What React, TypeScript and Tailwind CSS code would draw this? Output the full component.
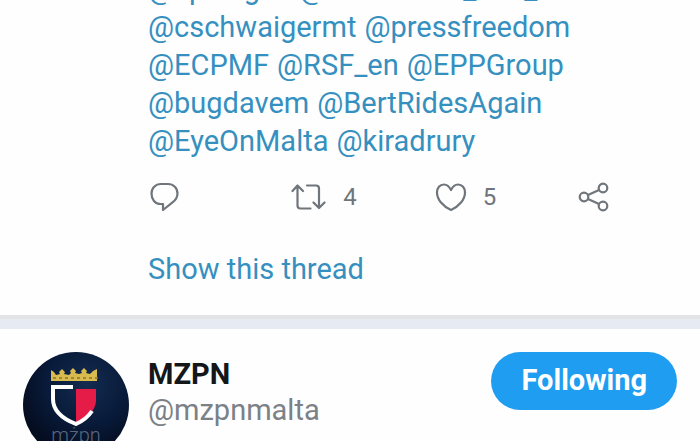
import type { ReactNode } from "react";

const mentionLines = [
    ["@speingen", "@danielmatt_ann_m"],
    ["@cschwaigermt", "@pressfreedom"],
    ["@ECPMF", "@RSF_en", "@EPPGroup"],
    ["@bugdavem", "@BertRidesAgain"],
    ["@EyeOnMalta", "@kiradrury"],
];

function ReplyIcon() {
    return (
        <svg viewBox="0 0 32 32" className="size-8" fill="none" stroke="currentColor" strokeWidth="2.2" strokeLinejoin="round">
            <path d="M13 3h7c5.500 0 9.500 4 9.500 9.500 0 4-2 6.800-5.300 9.200L15 29v-6h-2.500C7 23 3.500 18.500 3.500 12.500 3.500 7 7.500 3 13 3Z" />
        </svg>
    );
}

function RetweetIcon() {
    return (
        <svg viewBox="0 0 36 32" className="h-8 w-9" fill="none" stroke="currentColor" strokeWidth="2.2" strokeLinecap="round" strokeLinejoin="round">
            <path d="M1.500 10 6.500 4.500l5.500 5.500M6.500 5v19.500q0 3 3 3h10M16 4.500h9q3 0 3 3v19M22.500 21.500l5.500 5.500 5.500-5.500" />
        </svg>
    );
}

function HeartIcon() {
    return (
        <svg viewBox="0 0 32 32" className="size-8" fill="none" stroke="currentColor" strokeWidth="2.2" strokeLinejoin="round">
            <path d="M16 9C14 5 11.800 3.500 9 3.500 4.800 3.500 2 7 2 11.500c0 7 6 14 14 17.500 8-3.500 14-10.500 14-17.500 0-4.500-2.800-8-7-8-2.800 0-5 1.500-7 5.500Z" />
        </svg>
    );
}

function ShareIcon() {
    return (
        <svg viewBox="0 0 32 32" className="size-8" fill="none" stroke="currentColor" strokeWidth="2.2">
            <circle cx="6" cy="16" r="4.300" />
            <circle cx="25" cy="7" r="4.300" />
            <circle cx="25" cy="25" r="4.300" />
            <path d="m10 14 11-5M10 18l11 5" />
        </svg>
    );
}

function Action({ label, count, children }: { label: string; count?: number; children: ReactNode }) {
    return (
        <button type="button" aria-label={label} className="flex items-center gap-4">
            {children}
            {count !== undefined && <span className="text-2xl leading-8">{count}</span>}
        </button>
    );
}

function Avatar() {
    return (
        <svg viewBox="0 0 106 106" className="size-[106px] shrink-0" role="img" aria-label="MZPN">
            <defs>
                <radialGradient id="sky" cx="60%" cy="30%" r="65%">
                    <stop offset="0" stopColor="#142c50" />
                    <stop offset="0.600" stopColor="#081a39" />
                    <stop offset="1" stopColor="#050d20" />
                </radialGradient>
            </defs>
            <circle cx="53" cy="53" r="53" fill="url(#sky)" />
            {/* Crown */}
            <path d="M28 18l3 2 2 3 4-1-1-2 3-3 3 3-1 2 5 1 2-2-1-2 3-3 3 3-1 2 4 1 3-1-1-2 3-3 3 3-1 2 4 1 3-3 4-2v12H28Z" fill="#d9ba4e" />
            <path d="M30 26h46" stroke="#8f7526" strokeWidth="1.500" strokeDasharray="3 3" />
            {/* Shield */}
            <path d="M53 37h20v12c0 9-10 18-20 23Z" fill="#e51b48" />
            <path d="M50 35H30v12c0 12 10 20 23 25 7-3 12-7 16-13" fill="none" stroke="#fff" strokeWidth="4" />
            <text x="53" y="90" textAnchor="middle" fontSize="20" fill="#5b6780" className="font-['Roboto',sans-serif] font-light">
                mżpn
            </text>
        </svg>
    );
}

export default function App() {
    return (
        <main className="flex h-screen flex-col overflow-hidden bg-[#fefefe] font-['Roboto',sans-serif] text-[#6f757b]">
            <article className="flex shrink-0 flex-col items-start pr-[90px] pb-[30px] pl-[148px]">
                <div className="-mt-[30px] text-[29px] leading-[38px] text-[#3590c0]">
                    {mentionLines.map((line) => (
                        <p key={line[0]} className="flex gap-2 whitespace-nowrap">
                            {line.map((name) => (
                                <a key={name} href={`#${name}`}>{name}</a>
                            ))}
                        </p>
                    ))}
                </div>
                <div className="mt-[21px] grid w-full grid-cols-[1fr_1fr_1fr_auto]">
                    <Action label="Reply"><ReplyIcon /></Action>
                    <Action label="Retweet" count={4}><RetweetIcon /></Action>
                    <Action label="Like" count={5}><HeartIcon /></Action>
                    <Action label="Share"><ShareIcon /></Action>
                </div>
                <a href="#thread" className="mt-10 text-[29px] leading-8 text-[#3590c0]">Show this thread</a>
            </article>

            <div className="h-[14px] shrink-0 border-t-4 border-[#e2e3e5] bg-[#e6eaf2]" />

            <article className="flex shrink-0 items-start px-[23px] pt-[23px]">
                <Avatar />
                <div className="ml-[19px] flex-1">
                    <h2 className="mt-1 text-[29px] leading-9 font-bold text-[#14171a]">MZPN</h2>
                    <p className="text-[29px] leading-9 text-[#7b8187]">@mzpnmalta</p>
                </div>
                <button type="button" className="h-[58px] rounded-full bg-[#1f9df0] px-[30px] text-[29px] font-bold text-white">
                    Following
                </button>
            </article>
        </main>
    );
}
